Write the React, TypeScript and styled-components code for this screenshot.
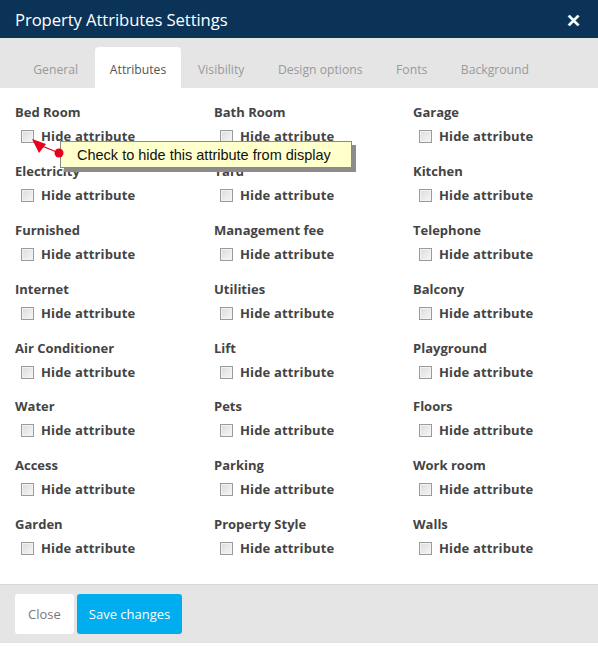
import React from "react";
import styled, { createGlobalStyle } from "styled-components";

const Global = createGlobalStyle`
  html, body { margin: 0; padding: 0; background: #fff; }
  body { font-family: "Open Sans", sans-serif; }
  * { box-sizing: border-box; }
`;

const Modal = styled.div`
  width: 598px;
  height: 646px;
  display: flex;
  flex-direction: column;
  background: #fff;
  position: relative;
`;

const Header = styled.div`
  height: 38px;
  background: #0b3358;
  display: flex;
  align-items: center;
  justify-content: space-between;
  padding: 0 15px 0 15px;
`;

const Title = styled.h1`
  margin: 0;
  font-size: 16.7px;
  font-weight: 400;
  color: #fff;
  font-family: "Open Sans", sans-serif;
  letter-spacing: -0.1px;
`;

const CloseX = styled.span`
  color: #fff;
  font-size: 18px;
  font-weight: 700;
  line-height: 1;
  margin-top: 2px;
  margin-right: 2px;
`;

const Tabs = styled.div`
  height: 50px;
  background: #e5e5e5;
  display: flex;
  align-items: flex-end;
  padding-left: 16.5px;
`;

const Tab = styled.div<{ $active?: boolean }>`
  height: 41px;
  padding: 3px ${(p) => (p.$active ? 15 : 16.75)}px 0;
  display: flex;
  align-items: center;
  font-size: 12.2px;
  color: ${(p) => (p.$active ? "#555" : "#9a9a9a")};
  background: ${(p) => (p.$active ? "#fff" : "transparent")};
  border-radius: 4px 4px 0 0;
`;

const Body = styled.div`
  flex: 1;
  padding: 15px 15px 0 15px;
  display: grid;
  grid-template-columns: 199px 199px 1fr;
  grid-auto-rows: 58.9px;
  position: relative;
`;

const Cell = styled.div`
  display: flex;
  flex-direction: column;
`;

const Label = styled.div`
  font-size: 13px;
  font-weight: 700;
  color: #444;
  line-height: 18px;
`;

const Check = styled.label`
  display: flex;
  align-items: center;
  margin-top: 6px;
  padding-left: 6px;
  font-size: 13px;
  font-weight: 700;
  color: #444;
  line-height: 18px;
  letter-spacing: 0.15px;
`;

const Box = styled.span`
  width: 13px;
  height: 13px;
  border: 1px solid #9b9b9b;
  background: linear-gradient(135deg, #dcdcdc, #f6f6f6);
  box-shadow: inset 0 0 0 1px #f2f2f2;
  margin-right: 7px;
  margin-top: 1px;
`;

const Tooltip = styled.div`
  position: absolute;
  left: 60px;
  top: 141px;
  width: 292px;
  height: 27px;
  background: #ffffcc;
  border: 1px solid #8a8a8a;
  box-shadow: 4px 4px 0 #8c8c8c;
  font-family: "Liberation Sans", Arial, sans-serif;
  font-size: 14.5px;
  color: #111;
  display: flex;
  align-items: center;
  padding-left: 16px;
`;

const Pointer = styled.svg`
  position: absolute;
  left: 28px;
  top: 134px;
`;

const Footer = styled.div`
  height: 59px;
  margin-bottom: 3px;
  background: #e5e5e5;
  border-top: 1px solid #d8d8d8;
  display: flex;
  align-items: center;
  padding: 0 15px;
  gap: 3px;
`;

const Button = styled.button<{ $primary?: boolean }>`
  height: 40px;
  border: none;
  border-radius: 3px;
  font-family: "Open Sans", sans-serif;
  font-size: 13px;
  padding: 0 ${(p) => (p.$primary ? 12 : 13)}px;
  background: ${(p) => (p.$primary ? "#00aeef" : "#fff")};
  color: ${(p) => (p.$primary ? "#fff" : "#777")};
`;

const items = [
  "Bed Room", "Bath Room", "Garage",
  "Electricity", "Yard", "Kitchen",
  "Furnished", "Management fee", "Telephone",
  "Internet", "Utilities", "Balcony",
  "Air Conditioner", "Lift", "Playground",
  "Water", "Pets", "Floors",
  "Access", "Parking", "Work room",
  "Garden", "Property Style", "Walls",
];

const tabs = ["General", "Attributes", "Visibility", "Design options", "Fonts", "Background"];

export default function App() {
  return (
    <>
      <Global />
      <Modal>
        <Header>
          <Title>Property Attributes Settings</Title>
          <CloseX>✕</CloseX>
        </Header>
        <Tabs>
          {tabs.map((t) => (
            <Tab key={t} $active={t === "Attributes"}>{t}</Tab>
          ))}
        </Tabs>
        <Body>
          {items.map((it) => (
            <Cell key={it}>
              <Label>{it}</Label>
              <Check>
                <Box />
                Hide attribute
              </Check>
            </Cell>
          ))}
        </Body>
        <Footer>
          <Button>Close</Button>
          <Button $primary>Save changes</Button>
        </Footer>
        <Tooltip>Check to hide this attribute from display</Tooltip>
        <Pointer width="40" height="30" viewBox="0 0 40 30">
          <line x1="31" y1="19" x2="14" y2="12" stroke="#e8001c" strokeWidth="1.3" />
          <polygon points="4,5 18,10 11,19" fill="#e8001c" />
          <circle cx="31" cy="19" r="4.5" fill="#e8001c" />
        </Pointer>
      </Modal>
    </>
  );
}
